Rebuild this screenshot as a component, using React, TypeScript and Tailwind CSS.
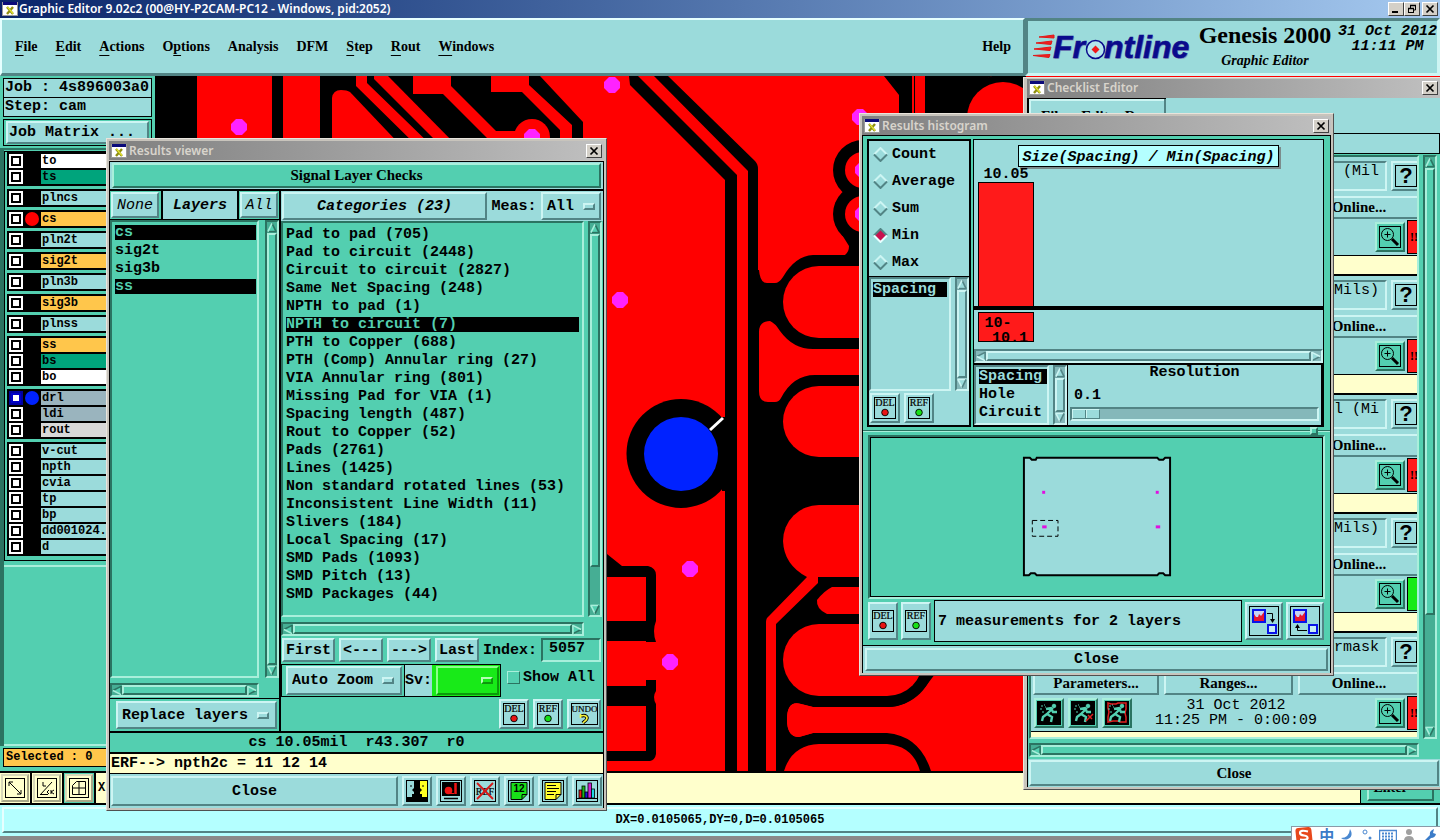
import React from "react";

const MONO = "font-['Liberation_Mono',monospace]";
const MONO_BOLD = "font-['Liberation_Mono',monospace] font-bold text-[15px] leading-[15px]";
const MONO_SMALL = "font-['Liberation_Mono',monospace] font-bold text-[12px] leading-[14px]";
const SERIF_BOLD = "font-['Liberation_Serif',serif] font-bold text-[15px] leading-[18px]";
const RAISED = "border-2 border-t-[#cdf5f3] border-l-[#cdf5f3] border-b-[#528485] border-r-[#528485]";
const SUNKEN = "border-2 border-t-[#528485] border-l-[#528485] border-b-[#cdf5f3] border-r-[#cdf5f3]";
const RAISED_G = "border-2 border-t-[#a9efdb] border-l-[#a9efdb] border-b-[#2b7361] border-r-[#2b7361]";
const SUNKEN_G = "border-2 border-t-[#2b7361] border-l-[#2b7361] border-b-[#a9efdb] border-r-[#a9efdb]";

type Tone = "teal" | "green";

function AppIcon() {
  return (
    <svg width="16" height="14" viewBox="0 0 16 14" className="shrink-0">
      <rect width="16" height="14" fill="#9a9a9a" />
      <rect x="1" y="0" width="14" height="3" fill="#0a0a7a" />
      <rect x="1" y="3" width="14" height="10" fill="#fff" />
      <path d="M5 5l6 7M11 5l-6 7" stroke="#8f8f10" strokeWidth="2.4" />
      <path d="M5.5 5l5.5 6.5" stroke="#e6e632" strokeWidth="1.2" />
    </svg>
  );
}

function CaptionButton({ kind }: { kind: "min" | "restore" | "close" }) {
  return (
    <button
      aria-label={kind}
      className="flex h-[14px] w-4 shrink-0 items-center justify-center border border-b-[#404040] border-l-white border-r-[#404040] border-t-white bg-[#d4d0c8]"
    >
      <svg width="10" height="10" viewBox="0 0 10 10" fill="none" stroke="#000">
        {kind === "min" && <path d="M1 8h6" strokeWidth="2" />}
        {kind === "close" && <path d="M1.500 1.500l7 7M8.500 1.500l-7 7" strokeWidth="1.700" />}
        {kind === "restore" && (
          <g>
            <path d="M3.500 4V1.500h5v4.500H7" />
            <path d="M3 1.500h6M1 4.500h6" strokeWidth="1.500" />
            <rect x="1.500" y="4.500" width="5" height="4" />
          </g>
        )}
      </svg>
    </button>
  );
}

function DialogTitle({ title }: { title: string }) {
  return (
    <div className="flex h-[19px] items-center gap-0.5 bg-linear-to-r from-[#808080] to-[#c0c0c0] px-0.5">
      <AppIcon />
      <h2 className="flex-1 font-['Noto_Sans',sans-serif] text-[12px] font-semibold leading-[16px] text-[#d8d4cc]">{title}</h2>
      <CaptionButton kind="close" />
    </div>
  );
}

function Arrow({ dir, tone }: { dir: "up" | "down" | "left" | "right"; tone: Tone }) {
  const light = tone === "teal" ? "#cdf5f3" : "#a9efdb";
  const dark = tone === "teal" ? "#528485" : "#2b7361";
  const face = tone === "teal" ? "#9bdbdb" : "#53cfb0";
  const rot = { up: 0, right: 90, down: 180, left: 270 }[dir];
  const edge = {
    up: [light, dark, dark],
    right: [light, dark, light],
    down: [dark, light, light],
    left: [light, dark, dark],
  }[dir];
  return (
    <button aria-label={dir} className="flex h-[11px] w-[10px] shrink-0 items-center justify-center">
      <svg width="10" height="11" viewBox="0 0 11 11">
        <g transform={`rotate(${rot} 5.5 5.5)`} strokeWidth="1.7" fill="none">
          <path d="M5.500 1L1 10h9z" fill={face} />
          <path d="M5.500 1L10 10" stroke={edge[1]} />
          <path d="M0.500 10h10" stroke={edge[2]} />
          <path d="M5.500 1L1 10" stroke={edge[0]} />
        </g>
      </svg>
    </button>
  );
}

function VScroll({ tone, thumb = "full" }: { tone: Tone; thumb?: "full" | "long" | "mid" }) {
  const t = tone === "teal";
  const size = { full: "grow", long: "grow-9", mid: "grow-4" }[thumb];
  return (
    <div className={`flex w-3.5 shrink-0 flex-col ${t ? SUNKEN + " bg-[#84b8ba]" : SUNKEN_G + " bg-[#46ae94]"}`}>
      <Arrow dir="up" tone={tone} />
      <div className={`${size} basis-0 ${t ? RAISED + " bg-[#9bdbdb]" : RAISED_G + " bg-[#53cfb0]"}`} />
      {thumb !== "full" && <div className="grow basis-0" />}
      <Arrow dir="down" tone={tone} />
    </div>
  );
}

function HScroll({ tone }: { tone: Tone }) {
  const t = tone === "teal";
  return (
    <div className={`flex h-3.5 w-full shrink-0 items-stretch ${t ? SUNKEN + " bg-[#84b8ba]" : SUNKEN_G + " bg-[#46ae94]"}`}>
      <Arrow dir="left" tone={tone} />
      <div className={`grow ${t ? RAISED + " bg-[#9bdbdb]" : RAISED_G + " bg-[#53cfb0]"}`} />
      <Arrow dir="right" tone={tone} />
    </div>
  );
}

function Btn({ children, className = "", label }: { children: React.ReactNode; className?: string; label?: string }) {
  return (
    <button aria-label={label} className={`flex items-center justify-center ${RAISED} bg-[#9bdbdb] ${className}`}>
      {children}
    </button>
  );
}

function MarkIcon({ text, dot }: { text: string; dot?: string }) {
  const w = text === "UNDO" ? 27 : 22;
  return (
    <svg width={w} height="22" viewBox={`0 0 ${w} 22`} className="shrink-0">
      <rect x="0.500" y="0.500" width={w - 1} height="21" fill="none" stroke="#000" />
      <text x={w / 2} y="9" textAnchor="middle" fontSize={dot ? "10" : "9"} fontFamily="Liberation Serif, serif" fill="#000" stroke="#000" strokeWidth="0.200">
        {text}
      </text>
      {dot ? (
        <circle cx={w / 2} cy="15.500" r="3.300" fill={dot} stroke="#000" strokeWidth="0.900" />
      ) : (
        <g fill="none">
          <path d="M10 13c5-1.500 7 1 5.500 3.500-1 1.800-2.500 2-3.500 3.500" stroke="#000" strokeWidth="3.400" />
          <path d="M9.500 11v4M9.500 13c5.500-1.500 7.500 1 6 3.500-1 1.800-2.500 2-3.500 3.500" stroke="#f5f53c" strokeWidth="1.600" />
        </g>
      )}
    </svg>
  );
}

function DelRef({ className }: { className: string }) {
  return (
    <>
      <Btn label="Delete" className={className}>
        <MarkIcon text="DEL" dot="#e81414" />
      </Btn>
      <Btn label="Reference" className={className}>
        <MarkIcon text="REF" dot="#18e018" />
      </Btn>
    </>
  );
}

function OptionMark({ green = false }: { green?: boolean }) {
  return (
    <span
      className={`h-[7px] w-3 shrink-0 ${
        green
          ? "border-2 border-b-[#0b9a0b] border-l-[#b6ffb6] border-r-[#0b9a0b] border-t-[#b6ffb6]"
          : "border-2 border-b-[#528485] border-l-[#cdf5f3] border-r-[#528485] border-t-[#cdf5f3]"
      }`}
    />
  );
}

function OptionMenu({ label, value, className = "" }: { label: string; value: string; className?: string }) {
  return (
    <label className={`flex items-center ${RAISED} bg-[#9bdbdb] ${className}`}>
      <select aria-label={label} className={`min-w-0 grow appearance-none bg-transparent ${MONO_BOLD}`}>
        <option>{value}</option>
      </select>
      <OptionMark />
    </label>
  );
}

/* ---------- layer column ---------- */

type Layer = { name: string; color: string; dot?: string; active?: boolean };
const TEAL = "bg-[#9bdbdb]";
const ORANGE = "bg-[#ffc64b]";
const LAYER_GROUPS: Layer[][] = [
  [{ name: "to", color: "bg-white" }, { name: "ts", color: "bg-[#00a47c]" }],
  [{ name: "plncs", color: TEAL }],
  [{ name: "cs", color: ORANGE, dot: "bg-[#ff0000]" }],
  [{ name: "pln2t", color: TEAL }],
  [{ name: "sig2t", color: ORANGE }],
  [{ name: "pln3b", color: TEAL }],
  [{ name: "sig3b", color: ORANGE }],
  [{ name: "plnss", color: TEAL }],
  [{ name: "ss", color: ORANGE }, { name: "bs", color: "bg-[#00a47c]" }, { name: "bo", color: "bg-white" }],
  [
    { name: "drl", color: "bg-[#9ab4be]", dot: "bg-[#0022ff]", active: true },
    { name: "ldi", color: "bg-[#9ab4be]" },
    { name: "rout", color: "bg-[#d8d8d8]" },
  ],
  ["v-cut", "npth", "cvia", "tp", "bp", "dd001024.", "d"].map((name) => ({ name, color: TEAL })),
];

function LayerColumn() {
  return (
    <aside className="flex w-[155px] shrink-0 flex-col bg-[#53cfb0]">
      <div className="px-[3px] pt-0.5">
        <div className={`border border-black bg-[#9bdbdb] pl-px ${MONO_BOLD}`}>
          <p className="h-[18px] leading-[18px]">Job : 4s896003a0</p>
        </div>
        <div className={`border border-t-0 border-black bg-[#9bdbdb] pl-px ${MONO_BOLD}`}>
          <p className="h-[18px] leading-[18px]">Step: cam</p>
        </div>
        <div className="mt-0.5 border border-black px-0.5 py-px">
          <Btn className={`h-[23px] w-full !justify-start pl-px ${MONO_BOLD}`}>Job Matrix ...</Btn>
        </div>
      </div>
      <div className="mt-0.5 flex grow flex-col border-l-4 border-t-2 border-[#2b7361]">
        <div className="mt-px flex flex-col gap-[3px] border-b border-l border-t border-black bg-[#53cfb0] pb-1 pl-0.5">
          {LAYER_GROUPS.map((group, gi) => (
            <ul key={gi} className="flex flex-col gap-0.5 bg-black p-0.5 pr-0">
              {group.map((l) => (
                <li key={l.name}>
                  <label className={`flex h-3.5 ${MONO_SMALL}`}>
                    <input
                      type="checkbox"
                      className={
                        l.active
                          ? "h-3.5 w-3.5 shrink-0 appearance-none border-2 border-[#0000a0] bg-white shadow-[inset_0_0_0_2px_#0000c8]"
                          : "h-3.5 w-3.5 shrink-0 appearance-none border-2 border-white bg-white shadow-[inset_0_0_0_2px_#000]"
                      }
                    />
                    <span className="flex w-[18px] shrink-0 items-center justify-center">
                      {l.dot && <span className={`h-3.5 w-3.5 shrink-0 rounded-full ${l.dot}`} />}
                    </span>
                    <span className={`grow whitespace-nowrap pl-px ${l.color}`}>{l.name}</span>
                  </label>
                </li>
              ))}
            </ul>
          ))}
        </div>
        <div className="mt-1 grow border-b-2 border-t-2 border-b-[#a9efdb] border-t-[#a9efdb]" />
      </div>
      <div className="px-[3px] pb-1 pt-0.5">
        <p className={`border border-black bg-[#ffc64b] pl-0.5 font-['Liberation_Mono',monospace] text-[12px] font-bold leading-[17px]`}>Selected : 0</p>
      </div>
    </aside>
  );
}

/* ---------- board artwork ---------- */

function BoardView() {
  const dots: [number, number][] = [[239, 127], [612, 85], [532, 137], [860, 117], [863, 170], [863, 214], [620, 300], [690, 569], [670, 662]];
  return (
    <svg className="block h-full w-full" viewBox="155 76 1285 695" preserveAspectRatio="xMinYMin slice">
      <rect x="155" y="76" width="1285" height="695" fill="#f00" />
      <path d="M155 76H540L583 122V150H155z" fill="#000" />
      <g fill="#f00">
        <path d="M197 76h75v74h-75zM283 76h37v74h-37z" />
        <path d="M332 150V98q1-8 9-8 6 0 9 2l55 58z" />
        <path d="M356 76h11v7l69 67h-15L356 86z" />
        <path d="M374 76h14l73 74h-16L374 79z" />
        <path d="M413 76h38v10l45 45h20v19h-17L443 94h-30z" />
        <path d="M491 76h38v9l43 40v25h-12v-20L522 92h-31z" />
        <circle cx="532" cy="137" r="18" />
      </g>
      <g fill="#000">
        <path d="M629 76h9l99 99v596h-12V180l-95-95z" />
        <path d="M654 76h14l87 85q3 3 3 8v602h-10V171z" />
        <circle cx="681" cy="453.500" r="54.500" />
        <path d="M722 417h6v74h-6z" />
        <path d="M748 270h11q1 13 8 13h8q4 0 8-6Q795 256 813 255h32q4-3 4-9l-10-16h40V349H813q-20 0-33-18-5-8-10-10-11 0-11 11v59q0 11 9 11h7q4 0 6-4Q793 375 815 375H1024V620H860v87h27q22 0 39-21l12-16h-52q44 0 0 37H813l-12-3q-14-4-14 15 0 18 12 18l14-4h74q33 3 44 38H748z" />
        <circle cx="863" cy="170" r="30" />
        <circle cx="863" cy="214" r="30" />
        <path d="M887 613a47 47 0 0 1 0 94h-74v-94z" />
      </g>
      <g fill="#f00">
        <circle cx="863" cy="170" r="18" />
        <circle cx="863" cy="214" r="18" />
        <path d="M900 266h-81a36 36 0 0 0 0 72h81z" />
        <path d="M900 386h-81a36 35.500 0 0 0 0 71h81z" />
        <path d="M900 505h-81a36 36 0 0 0-36 36q1 24 24 36h93z" />
        <path d="M807 577h11v6l-42 41v147h-10V622q0-4 3-6z" />
        <path d="M900 587h-68q-8 4-15 13-1 9 10 14h73z" />
        <rect x="783" y="624" width="140" height="72" rx="36" />
        <path d="M784 771q8-26 35-27h68q26 2 33 27z" />
        <path d="M787 720q0-20 14-16l12 3h40v26h-40l-14 4q-12 0-12-17z" />
      </g>
      <path d="M607 554l15 12h26q8 2 8 9v46q-4 10 0 21h-10v-1h-39v-20h39v-44h-39zM607 686h39v-6h10v11q-4 6 0 13v50q-1 6-6 7h-43v-10h39v-45h-39z" fill="#000" />
      <circle cx="681" cy="454" r="37" fill="#0022ff" />
      <path d="M710 430l13-12" stroke="#fff" strokeWidth="3" />
      <g fill="#000">
        <path d="M884 76h28v50h-13V95z" />
        <path d="M914 76h6v50h-6zM923 76h69q-24 10-32 37v10h-37z" />
        <path d="M992 76h34v50h-70q4-42 36-50z" />
      </g>
      <path d="M915 76h10v50h-10z" fill="#f00" />
      <circle cx="1003" cy="118" r="36" fill="#f00" />
      {dots.map(([x, y]) => (
        <path key={`${x}-${y}`} transform={`translate(${x} ${y})`} d="M-3-8h6l5 5v6l-5 5h-6l-5-5v-6z" fill="#ff22ff" />
      ))}
    </svg>
  );
}

/* ---------- results viewer ---------- */

const CATEGORIES = [
  "Pad to pad (705)", "Pad to circuit (2448)", "Circuit to circuit (2827)", "Same Net Spacing (248)",
  "NPTH to pad (1)", "NPTH to circuit (7)", "PTH to Copper (688)", "PTH (Comp) Annular ring (27)",
  "VIA Annular ring (801)", "Missing Pad for VIA (1)", "Spacing length (487)", "Rout to Copper (52)",
  "Pads (2761)", "Lines (1425)", "Non standard rotated lines (53)", "Inconsistent Line Width (11)",
  "Slivers (184)", "Local Spacing (17)", "SMD Pads (1093)", "SMD Pitch (13)", "SMD Packages (44)",
];

function ListRows({ items, selected, tone }: { items: string[]; selected: string[]; tone: Tone }) {
  return (
    <ul role="listbox" className={MONO_BOLD}>
      {items.map((it) => {
        const on = selected.includes(it);
        return (
          <li key={it} role="option" aria-selected={on} className="flex h-[18px] items-center">
            <span className={`block h-[15px] grow whitespace-pre ${on ? (tone === "teal" ? "bg-black text-[#9bdbdb]" : "bg-black text-[#53cfb0]") : ""}`}>{it}</span>
          </li>
        );
      })}
    </ul>
  );
}

function FacesIcon() {
  return (
    <svg width="22" height="22" viewBox="0 0 22 22">
      <rect width="22" height="22" fill="#000" />
      <path d="M1 1h7v7l-2 2 2 2v2H6v3H1z" fill="#9bdbdb" />
      <path d="M21 1h-7v7l2 2-2 2v2h2v3h5z" fill="#ffff22" />
      <path d="M5 5v2M17 5v2" stroke="#000" />
    </svg>
  );
}
function CameraIcon() {
  return (
    <svg width="22" height="22" viewBox="0 0 22 22">
      <rect x="0.500" y="0.500" width="21" height="21" fill="#9bdbdb" stroke="#000" />
      <rect x="2" y="2" width="18" height="14" fill="#000" />
      <circle cx="8.500" cy="10.500" r="3.800" fill="#f01414" />
      <path d="M8 13.500h6" stroke="#f01414" />
      <path d="M15.500 3v11" stroke="#f01414" strokeWidth="2.500" />
      <path d="M4 18.500h14" stroke="#000" strokeWidth="1.500" />
    </svg>
  );
}
function NoRefIcon() {
  return (
    <svg width="22" height="22" viewBox="0 0 22 22">
      <rect x="0.500" y="0.500" width="21" height="21" fill="none" stroke="#000" />
      <text x="11" y="15" textAnchor="middle" fontSize="10" fontFamily="Liberation Serif, serif" stroke="#000" strokeWidth="0.200">REF</text>
      <path d="M3 3l16 16M19 3L3 19" stroke="#d81818" strokeWidth="1.800" />
    </svg>
  );
}
function PageIcon({ numbered }: { numbered: boolean }) {
  return (
    <svg width="22" height="22" viewBox="0 0 22 22">
      <rect x="0.500" y="0.500" width="21" height="21" fill="none" stroke="#000" />
      <path d="M3 2.500h16v12l-5 5H3z" fill={numbered ? "#18e018" : "#ffff30"} stroke="#000" />
      <path d="M19 14.500h-5v5" fill="none" stroke="#000" />
      {numbered ? (
        <text x="11" y="12" textAnchor="middle" fontSize="10" fontFamily="Liberation Sans, sans-serif" fontWeight="bold">12</text>
      ) : (
        <path d="M5 5.500h9M5 8.500h12M5 11.500h9M5 14.500h7" stroke="#000" />
      )}
    </svg>
  );
}
function BarsIcon() {
  return (
    <svg width="22" height="22" viewBox="0 0 22 22">
      <rect x="0.500" y="0.500" width="21" height="21" fill="#9bdbdb" stroke="#000" />
      <g stroke="#000" strokeWidth="0.800">
        <rect x="3" y="10" width="3" height="8" fill="#f01818" />
        <rect x="6" y="6" width="3" height="12" fill="#18b818" />
        <rect x="9" y="12" width="3" height="6" fill="#1818e0" />
        <rect x="12" y="3" width="3.500" height="15" fill="#d020d0" />
        <rect x="15.500" y="9" width="3" height="9" fill="#20d8e8" />
      </g>
      <path d="M1 18.500h20" stroke="#000" />
    </svg>
  );
}

function ResultsViewer() {
  return (
    <section className="absolute left-[106px] top-[138px] w-[501px] border border-b-[#505050] border-l-[#e8e4dc] border-r-[#505050] border-t-[#e8e4dc] bg-[#c8c4bc] p-0.5">
      <DialogTitle title="Results viewer" />
      <div className="mt-px border border-b-0 border-black bg-[#53cfb0]">
        <div className="border-b-2 border-black bg-[#9bdbdb] px-0.5 py-px">
          <h3 className={`${RAISED_G} bg-[#53cfb0] text-center font-['Liberation_Serif',serif] text-[15px] font-bold leading-[21px]`}>Signal Layer Checks</h3>
        </div>
        <div className="flex border-b-2 border-black">
          <div className="flex w-[171px] shrink-0 flex-col border-r-2 border-black">
            <div className={`flex h-[29px] border-b border-black ${MONO} text-[15px] italic leading-[15px]`}>
              <Btn className="my-px ml-px w-12 shrink-0">None</Btn>
              <h4 className="ml-0.5 flex grow items-center justify-center border-x-2 border-black bg-[#9bdbdb] font-bold">Layers</h4>
              <Btn className="m-px w-[38px] shrink-0">All</Btn>
            </div>
            <div className="flex grow gap-[6px]">
              <div className={`grow ${SUNKEN_G} py-px pl-[3px] pr-px`}>
                <ListRows items={["cs", "sig2t", "sig3b", "ss"]} selected={["cs", "ss"]} tone="green" />
              </div>
              <VScroll tone="green" />
            </div>
            <div className="mt-[5px] flex pr-5">
              <HScroll tone="green" />
            </div>
            <div className="mt-px border-t border-black py-0.5 pl-1.5 pr-0.5">
              <OptionMenu label="Layer action" value="Replace layers" className="h-7 gap-1 pl-1 pr-1.5" />
            </div>
          </div>
          <div className="flex min-w-0 grow flex-col">
            <div className="flex h-[30px] bg-[#9bdbdb]">
              <Btn className={`my-px ml-px w-[205px] shrink-0 italic ${MONO_BOLD}`}>Categories (23)</Btn>
              <span className={`flex grow items-center justify-center ${MONO_BOLD}`}>Meas:</span>
              <OptionMenu label="Measurement filter" value="All" className="my-px mr-0.5 w-[60px] shrink-0 gap-1 pl-1 pr-1" />
            </div>
            <div className="flex gap-1 pr-px">
              <div className={`grow ${SUNKEN_G} pb-3 pl-[3px] pr-[3px] pt-0.5`}>
                <ListRows items={CATEGORIES} selected={["NPTH to circuit (7)"]} tone="green" />
              </div>
              <VScroll tone="green" thumb="long" />
            </div>
            <div className="mt-[5px] flex pr-[19px]">
              <HScroll tone="green" />
            </div>
            <div className={`mt-0.5 flex h-6 gap-1 pl-px pr-0.5 ${MONO_BOLD}`}>
              <Btn className="w-[53px] shrink-0">First</Btn>
              <Btn className="w-11 shrink-0">&lt;---</Btn>
              <Btn className="w-11 shrink-0">---&gt;</Btn>
              <Btn className="w-11 shrink-0">Last</Btn>
              <label htmlFor="index" className="flex w-[54px] shrink-0 items-center">Index:</label>
              <input id="index" defaultValue="5057" className={`min-w-0 grow bg-[#53cfb0] pb-1 pl-1.5 ${SUNKEN_G}`} />
            </div>
            <div className="mt-0.5 flex h-[33px]">
              <div className="flex w-[124px] shrink-0 border border-black py-px pl-1 pr-0.5">
                <OptionMenu label="Zoom mode" value="Auto Zoom" className="grow gap-1 pl-1 pr-1.5" />
              </div>
              <div className={`flex w-24 shrink-0 items-center border-y border-r border-black bg-[#9bdbdb] ${MONO_BOLD}`}>
                <span className="w-[27px] shrink-0">Sv:</span>
                <div className="flex h-full grow bg-[#18ea18] py-px pl-1 pr-px">
                  <label className="flex grow items-center border-2 border-b-[#0b9a0b] border-l-[#8cff8c] border-r-[#0b9a0b] border-t-[#8cff8c] pr-1">
                    <select aria-label="Severity" className="min-w-0 grow appearance-none bg-transparent">
                      <option></option>
                    </select>
                    <OptionMark green />
                  </label>
                </div>
              </div>
              <label className={`ml-1.5 flex h-[26px] items-center gap-[3px] ${MONO_BOLD}`}>
                <input type="checkbox" className="h-[13px] w-[13px] shrink-0 appearance-none border border-b-[#2b7361] border-l-[#a9efdb] border-r-[#2b7361] border-t-[#a9efdb]" />
                <span className="whitespace-nowrap">Show All</span>
              </label>
            </div>
            <div className="mt-0.5 flex h-[30px] justify-end gap-1 pr-0.5">
              <DelRef className="w-[30px] shrink-0" />
              <Btn label="Undo" className="w-[34px] shrink-0">
                <MarkIcon text="UNDO" />
              </Btn>
            </div>
            <div className="h-0.5" />
          </div>
        </div>
        <p className={`h-[19px] whitespace-pre text-center leading-[19px] font-['Liberation_Mono',monospace] text-[15px] font-bold`}>{"cs 10.05mil  r43.307  r0"}</p>
        <p className="h-[22px] border-b border-t-2 border-black bg-[#ffffcc] pl-px font-['Liberation_Mono',monospace] text-[15px] font-bold leading-[19px]">ERF--&gt; npth2c = 11 12 14</p>
        <div className="flex h-[34px] gap-1 bg-[#9bdbdb] px-px py-0.5">
          <Btn className={`grow ${MONO_BOLD}`}>Close</Btn>
          <Btn label="Compare" className="w-[30px] shrink-0"><FacesIcon /></Btn>
          <Btn label="Snapshot" className="w-[30px] shrink-0"><CameraIcon /></Btn>
          <Btn label="Clear references" className="w-[30px] shrink-0"><NoRefIcon /></Btn>
          <Btn label="Numbered notes" className="w-[30px] shrink-0"><PageIcon numbered /></Btn>
          <Btn label="Notes" className="w-[30px] shrink-0"><PageIcon numbered={false} /></Btn>
          <Btn label="Histogram" className="w-[30px] shrink-0"><BarsIcon /></Btn>
        </div>
      </div>
    </section>
  );
}

/* ---------- results histogram ---------- */

function CopyIcon({ back }: { back: boolean }) {
  return (
    <svg width="30" height="30" viewBox="0 0 30 30">
      <rect x="0.500" y="0.500" width="29" height="29" fill="none" stroke="#000" />
      <rect x="4" y="4" width="12" height="12" fill="#c8d4f4" stroke="#0a14e8" strokeWidth="2" />
      <path d="M5 15V8l2 3h2l1-3 2 2 3-4v9z" fill="#e81830" />
      <rect x="19" y="19" width="8" height="8" fill="#c8ecf4" stroke="#0a14e8" strokeWidth="2" />
      {back ? (
        <g><path d="M17 24.500H7.500V21" fill="none" stroke="#000" /><path d="M5 22l2.500-4 2.500 4z" /></g>
      ) : (
        <g><path d="M18 7.500h5.500V14" fill="none" stroke="#000" /><path d="M21 13l2.500 4 2.500-4z" /></g>
      )}
    </svg>
  );
}

function ResultsHistogram() {
  const board = [[1042, 493], [1157, 493], [1042, 528], [1157, 528]];
  return (
    <section className="absolute right-[106px] top-[113px] w-[475px] border border-b-[#505050] border-l-[#e8e4dc] border-r-[#505050] border-t-[#e8e4dc] bg-[#c8c4bc] p-0.5">
      <DialogTitle title="Results histogram" />
      <div className="border border-b-0 border-black bg-[#53cfb0] pt-[3px]">
        <div className="flex gap-0.5 pl-1 pr-1.5">
          <div className="flex w-[104px] shrink-0 flex-col border-2 border-black bg-[#9bdbdb]">
            <fieldset>
              {["Count", "Average", "Sum", "Min", "Max"].map((n) => (
                <label key={n} className={`flex h-[27px] items-center gap-1 pl-1 ${MONO_BOLD}`}>
                  <input type="radio" name="stat" defaultChecked={n === "Min"} className="sr-only" />
                  <svg width="15" height="15" viewBox="0 0 15 15" className="shrink-0">
                    <path d="M1 7.500L7.500 1 14 7.500 7.500 14z" fill={n === "Min" ? "#c8104e" : "#9bdbdb"} />
                    <path d="M1 7.500L7.500 1 14 7.500" fill="none" strokeWidth="2" stroke={n === "Min" ? "#528485" : "#cdf5f3"} />
                    <path d="M1 7.500L7.500 14 14 7.500" fill="none" strokeWidth="2" stroke={n === "Min" ? "#e6ffff" : "#528485"} />
                  </svg>
                  {n}
                </label>
              ))}
            </fieldset>
            <div className="flex gap-1 border-t border-black">
              <div className={`h-[114px] grow ${SUNKEN} px-0.5 pt-px`}>
                <ListRows items={["Spacing"]} selected={["Spacing"]} tone="teal" />
              </div>
              <VScroll tone="teal" />
            </div>
            <div className="mb-0.5 mt-0.5 flex h-[30px] gap-1 pl-px">
              <DelRef className="w-[30px] shrink-0" />
            </div>
          </div>
          <div className={`flex min-w-0 grow flex-col border border-b-2 border-black bg-[#9bdbdb] ${MONO_BOLD}`}>
            <div className="flex grow flex-col pt-[5px]">
              <h3 className="h-[22px] self-center border border-black bg-[#b4ffff] px-[3px] italic leading-[23px] shadow-[2px_2px_0_#7c8c8c]">Size(Spacing) / Min(Spacing)</h3>
              <div className="flex grow flex-col pl-1">
                <div className="flex w-14 grow flex-col">
                  <span className="text-center">10.05</span>
                  <div className="grow border border-b-0 border-black bg-[#ff1a1a]" />
                </div>
              </div>
              <div className="h-1 bg-black" />
              <div className="ml-1 mt-0.5 w-14 border border-black bg-[#ff1a1a] text-center">
                <p className="h-3.5 pt-[3px] pr-4">10-</p>
                <p className="h-3.5 pt-1 pl-2">10.1</p>
              </div>
              <div className="h-[7px]" />
            </div>
            <HScroll tone="teal" />
            <div className="flex h-[62px] shrink-0 border-t-2 border-black">
              <div className={`w-[75px] shrink-0 ${SUNKEN} pl-[3px]`}>
                <ListRows items={["Spacing", "Hole", "Circuit"]} selected={["Spacing"]} tone="teal" />
              </div>
              <div className="ml-1 flex"><VScroll tone="teal" /></div>
              <div className="flex min-w-0 grow flex-col border-l border-r-2 border-black px-0.5 pb-0.5">
                <label htmlFor="resolution" className="text-center">Resolution</label>
                <output htmlFor="resolution" className="mt-2 pl-1">0.1</output>
                <input
                  id="resolution"
                  type="range"
                  defaultValue="0"
                  className={`mt-1 h-3.5 w-full appearance-none bg-[#84b8ba] ${SUNKEN} [&::-webkit-slider-thumb]:h-2.5 [&::-webkit-slider-thumb]:w-7 [&::-webkit-slider-thumb]:appearance-none [&::-webkit-slider-thumb]:border [&::-webkit-slider-thumb]:border-t-[#cdf5f3] [&::-webkit-slider-thumb]:border-l-[#cdf5f3] [&::-webkit-slider-thumb]:border-b-[#528485] [&::-webkit-slider-thumb]:border-r-[#528485] [&::-webkit-slider-thumb]:bg-[linear-gradient(90deg,#9bdbdb_12px,#528485_12px,#528485_13px,#cdf5f3_13px,#cdf5f3_14px,#9bdbdb_14px)]`}
                />
              </div>
            </div>
          </div>
        </div>
        <div className="flex h-2 items-center">
          <div className="h-0.5 grow border-t border-t-[#2b7361] border-b border-b-[#a9efdb]" />
          <div className={`h-2 w-2 ${RAISED_G} bg-[#53cfb0]`} />
          <div className="h-0.5 w-3 border-t border-t-[#2b7361] border-b border-b-[#a9efdb]" />
        </div>
        <div className={`mx-[5px] ${SUNKEN_G}`}>
          <svg viewBox="869 438 453 160" className="block h-[160px] w-full border border-black">
            <path d="M1022 461v-3h6l2 2h4l1-2h122l2 2h4l2-2h5v119h-5l-2-2h-4l-2 2h-122l-2-2h-4l-2 2h-5z" fill="#9bdbdb" stroke="#000" strokeWidth="2" />
            {board.map(([x, y]) => <rect key={`${x}${y}`} x={x - 1.500} y={y - 1.500} width={y > 500 ? 4.500 : 3} height="3" fill="#e010e0" />)}
            <rect x="1030.500" y="521.500" width="26" height="16" fill="none" stroke="#000" strokeDasharray="5 3" />
          </svg>
        </div>
        <div className="mt-px flex h-[42px] items-center gap-[3px] pb-0 pl-[5px] pr-1.5">
          <DelRef className="h-[38px] w-[30px] shrink-0" />
          <p className={`flex h-[42px] grow items-center border border-black bg-[#9bdbdb] pl-[3px] ${MONO_BOLD}`}>7 measurements for 2 layers</p>
          <Btn label="Copy down" className="h-[38px] w-[38px] shrink-0"><CopyIcon back={false} /></Btn>
          <Btn label="Copy up" className="h-[38px] w-[38px] shrink-0"><CopyIcon back /></Btn>
        </div>
        <div className="mt-[3px] border-t border-black bg-[#9bdbdb] px-0.5 pb-0.5 pt-0.5">
          <Btn className={`h-[23px] w-full ${MONO_BOLD}`}>Close</Btn>
        </div>
      </div>
    </section>
  );
}

/* ---------- checklist editor ---------- */

function RunIcon({ variant }: { variant: 0 | 1 | 2 }) {
  return (
    <svg width="24" height="24" viewBox="0 0 24 24">
      <rect width="24" height="24" fill="#000" />
      {variant === 2 && <path d="M3 2l3 1h5l2-1h8v6l-1 4 1 4v5h-6l-2-1h-5l-5 1v-5l1-5-1-4z" fill="none" stroke="#e02020" strokeWidth="1.500" />}
      <g stroke="#53cfb0" fill="none">
        <circle cx="17" cy="5" r="1.800" fill="#53cfb0" />
        <path d="M16 7l-6 6 5 3-1 5M10 13l-4 3-1 4M9 8l5-1 2 4h4" strokeWidth="2.400" />
        <path d="M4 5h2M3 8h2M7 4h1M5 11h2M8 6h1" />
      </g>
      {variant === 1 && <path d="M15 20l7-7M17 14l4 4" stroke="#e02020" strokeWidth="1.500" />}
    </svg>
  );
}

function MagnifierIcon() {
  return (
    <svg width="22" height="22" viewBox="0 0 22 22" fill="none" stroke="#000">
      <rect x="0.500" y="0.500" width="21" height="21" />
      <circle cx="8.500" cy="8.500" r="6" />
      <path d="M5.500 8.500h6M8.500 5.500v6" />
      <path d="M13 13l6 6" strokeWidth="3" />
    </svg>
  );
}

type Check = { tail: string; ok?: boolean; ran?: [string, string] };
const CHECKS: Check[] = [
  { tail: "(Mil" },
  { tail: "Mils)" },
  { tail: "l (Mi" },
  { tail: "Mils)", ok: true },
  { tail: "rmask", ran: ["31 Oct 2012", "11:25 PM - 0:00:09"] },
];

function CheckItem({ tail, ok, ran }: Check) {
  return (
    <li className="flex h-[119px] w-[412px] shrink-0 flex-col border-b-2 border-black bg-[#9bdbdb]">
      <div className="flex h-[39px] gap-1 pl-0.5 pt-1">
        <p className={`h-[30px] w-[354px] ${SUNKEN} pr-1.5 text-right font-['Liberation_Mono',monospace] text-[15px] leading-[17px]`}>{tail}</p>
        <Btn label="Help" className="h-[30px] w-[30px] shrink-0">
          <span className="flex h-[22px] w-[22px] items-center justify-center border border-black font-['Liberation_Sans',sans-serif] text-[22px] font-bold leading-[20px]">?</span>
        </Btn>
      </div>
      <div className={`flex h-[23px] gap-[5px] pl-0.5 ${SERIF_BOLD}`}>
        <Btn className="w-[126px] shrink-0">Parameters...</Btn>
        <Btn className="w-[129px] shrink-0">Ranges...</Btn>
        <Btn className="w-[122px] shrink-0">Online...</Btn>
      </div>
      <div className="flex h-[36px] items-center">
        <div className="flex w-[102px] shrink-0 gap-1 pl-[3px]">
          {([0, 1, 2] as const).map((v) => (
            <button key={v} aria-label={`Run ${v + 1}`} className={`flex h-[30px] w-[30px] items-center justify-center ${RAISED_G} bg-[#53cfb0]`}>
              <RunIcon variant={v} />
            </button>
          ))}
        </div>
        {ran && (
          <p className="w-[206px] shrink-0 text-center font-['Liberation_Mono',monospace] text-[15px] leading-[15px]">
            {ran[0]}
            <br />
            {ran[1]}
          </p>
        )}
        <div className="flex grow justify-end">
          <button aria-label="Inspect" className={`flex h-[30px] w-[30px] items-center justify-center ${RAISED_G} bg-[#53cfb0]`}>
            <MagnifierIcon />
          </button>
        </div>
        <div className={`ml-0.5 flex h-[34px] w-9 shrink-0 items-center border border-black ${ok ? "bg-[#18ea18]" : "bg-[#ff1a1a]"}`}>
          <span className="pl-0.5 font-['Liberation_Serif',serif] text-[12px] font-bold">{ok ? "" : "!!"}</span>
        </div>
      </div>
      <div className="grow border-t border-black bg-[#ffffcc]" />
    </li>
  );
}

function ChecklistEditor() {
  return (
    <section className="absolute bottom-[50px] right-0 top-[77px] flex w-[417px] flex-col border border-r-0 border-b-[#505050] border-l-[#e8e4dc] border-t-[#e8e4dc] bg-[#c8c4bc] pb-0.5 pl-[3px] pt-px">
      <DialogTitle title="Checklist Editor" />
      <div className="flex min-h-0 grow flex-col border-l border-black bg-[#53cfb0]">
        <div className="h-[35px] shrink-0 bg-[#9bdbdb]">
          <nav className={`flex h-[30px] w-[138px] gap-4 border-l border-t border-black pl-3 pt-2 ${SERIF_BOLD} shadow-[inset_-2px_0_0_#528485,inset_2px_2px_0_#cdf5f3]`}>
            <button className="self-start">File</button>
            <button className="self-start">Edit</button>
            <button className="self-start">Run</button>
          </nav>
        </div>
        <div className="h-[21px] shrink-0 border border-black bg-[#9bdbdb]" />
        <div className="mt-px flex min-h-0 grow gap-1 pl-px pr-[3px]">
          <div className={`min-w-0 grow overflow-hidden ${SUNKEN_G}`}>
            <ul className="flex flex-col">
              {CHECKS.map((c, i) => (
                <CheckItem key={i} {...c} />
              ))}
            </ul>
          </div>
          <VScroll tone="green" thumb="mid" />
        </div>
        <div className="mt-1 flex shrink-0 pb-0.5 pl-px pr-[21px]">
          <HScroll tone="green" />
        </div>
        <div className="shrink-0 bg-[#9bdbdb] p-px">
          <Btn className={`h-[26px] w-full ${SERIF_BOLD}`}>Close</Btn>
        </div>
      </div>
    </section>
  );
}

/* ---------- main window ---------- */

const MENUS: [string, string, string][] = [
  ["", "F", "ile"], ["", "E", "dit"], ["", "A", "ctions"], ["O", "p", "tions"], ["Analysis", "", ""],
  ["DFM", "", ""], ["", "S", "tep"], ["", "R", "out"], ["", "W", "indows"],
];

function Header() {
  return (
    <header className="flex h-[58px] shrink-0 bg-[#9bdbdb]">
      <nav className={`flex grow items-center border-2 border-b-[3px] border-[#528485] border-l-[#e6ffff] border-t-[#e6ffff] pl-[13px] pr-3 font-['Liberation_Serif',serif] text-[14px] font-bold leading-[18px]`}>
        <div className="flex gap-[18px]">
          {MENUS.map(([a, u, b]) => (
            <button key={a + u + b}>
              {a}
              <span className="underline underline-offset-4">{u}</span>
              {b}
            </button>
          ))}
        </div>
        <button className="ml-auto">Help</button>
      </nav>
      <div className="flex w-[415px] shrink-0 border-[3px] border-b-[#cdf5f3] border-l-[#528485] border-r-[#cdf5f3] border-t-[#528485]">
        <svg width="164" height="52" viewBox="1028 21 164 52" className="shrink-0">
          <path d="M1039 37l15-2v3zM1036 43l16-2-1 3.500zM1034 49l17-2-1 3.500zM1033 55.500l17-1-1 3z" fill="#f02020" stroke="#e01818" strokeWidth="1" />
          <g fontFamily="Liberation Sans, sans-serif" fontWeight="bold" fontStyle="italic" fontSize="32">
            <text x="1054" y="59" fill="#8a9cc0">Fr</text>
            <text x="1105" y="59" fill="#8a9cc0">ntline</text>
            <text x="1053" y="58" fill="#0a0a8c" stroke="#0a0a8c" strokeWidth="0.600">Fr</text>
            <text x="1104" y="58" fill="#0a0a8c" stroke="#0a0a8c" strokeWidth="0.600">ntline</text>
          </g>
          <circle cx="1095.500" cy="49.500" r="9" fill="#b4e6ec" stroke="#0a0a8c" strokeWidth="1.500" />
          <path d="M1095.500 45.500l4 4-4 4-4-4z" fill="#f01818" />
        </svg>
        <div className="flex grow flex-col items-center font-['Liberation_Serif',serif]">
          <h1 className="whitespace-nowrap text-[24px] font-bold leading-[28px]">Genesis 2000</h1>
          <p className="text-[14px] font-bold italic leading-[24px]">Graphic Editor</p>
        </div>
        <p className={`shrink-0 pt-[3px] text-center italic ${MONO_BOLD}`}>
          31 Oct 2012
          <br />
          11:11 PM
        </p>
      </div>
    </header>
  );
}

function ToolCell({ active = false, label, children }: { active?: boolean; label: string; children: React.ReactNode }) {
  return (
    <div className={`flex w-8 items-center justify-center border-r-2 border-black ${active ? "bg-[#53cfb0]" : ""}`}>
      <button aria-label={label} className="flex h-7 w-7 items-center justify-center border-2 border-b-[#a8a888] border-l-[#d8d8b8] border-r-[#a8a888] border-t-[#d8d8b8] bg-[#ffffcc]">
        <svg width="20" height="20" viewBox="0 0 20 20" fill="none" stroke="#000">
          {children}
        </svg>
      </button>
    </div>
  );
}

export default function App() {
  return (
    <div className="relative flex h-screen flex-col overflow-hidden bg-[#9bdbdb] text-black">
      <div className="flex h-[18px] shrink-0 items-center bg-linear-to-r from-[#0a246a] to-[#a6caf0] px-0.5">
        <AppIcon />
        <span className="grow pl-px font-['Noto_Sans',sans-serif] text-[12px] font-semibold leading-[16px] text-white">
          Graphic Editor 9.02c2 (00@HY-P2CAM-PC12 - Windows, pid:2052)
        </span>
        <CaptionButton kind="min" />
        <CaptionButton kind="restore" />
        <span className="w-0.5" />
        <CaptionButton kind="close" />
      </div>
      <Header />
      <main className="flex min-h-0 grow">
        <LayerColumn />
        <div className="min-w-0 grow">
          <BoardView />
        </div>
      </main>
      <div className="flex h-[34px] shrink-0 border-y-2 border-black bg-[#ffffcc]">
        <ToolCell label="Select line">
          <rect x="0.500" y="0.500" width="19" height="19" />
          <path d="M4 4l12 12M4 8V4h4M16 12v4h-4" />
        </ToolCell>
        <ToolCell label="Select angle">
          <rect x="0.500" y="0.500" width="19" height="19" />
          <path d="M3 17L15 4M3 16.500h8M6 4v4h3M12 12l-2 2 2 2M14 12v4M17 12l-3 2 3 2" />
        </ToolCell>
        <ToolCell label="Grid" active>
          <rect x="0.500" y="0.500" width="19" height="19" />
          <path d="M3.500 16.500v-9l4-4h9v13zM10 3.500v13M3.500 10h13" />
        </ToolCell>
        <span className={`self-center pl-0.5 ${MONO_SMALL}`}>X</span>
        <div className="ml-auto w-20 border-l border-black bg-[#53cfb0] px-1.5 pb-0.5">
          <button className={`h-full w-full ${RAISED_G} pr-5 text-center font-['Liberation_Serif',serif] text-[14px] font-bold`}>Enter</button>
        </div>
      </div>
      <footer className="h-[35px] shrink-0 border-b-4 border-[#8a8a8a] bg-[#b4ffff] pt-0.5">
        <p className={`mx-0.5 border-2 border-t-[#e6ffff] border-l-[#e6ffff] border-b-[#528485] border-r-[#528485] h-[26px] text-center font-['Liberation_Mono',monospace] text-[12px] font-bold leading-[22px]`}>DX=0.0105065,DY=0,D=0.0105065</p>
      </footer>

      <ChecklistEditor />
      <ResultsHistogram />
      <ResultsViewer />

      <div className="absolute bottom-0 right-0 flex h-3.5 w-[149px] items-start justify-around overflow-hidden border-l border-t border-[#8a9aa8] bg-white">
        <svg width="18" height="14" viewBox="0 0 18 14">
          <rect x="1" y="0.500" width="16" height="18" rx="3" fill="#e8481c" transform="rotate(-6 9 9)" />
          <path d="M13 4.500q-8-2-8 1.500 0 2 4 2.500t3.500 3q-1 2-7.500 1" fill="none" stroke="#fff" strokeWidth="2.200" />
        </svg>
        <span className="font-['Noto_Sans_CJK_SC',sans-serif] text-[15px] font-bold leading-[16px] text-[#3c7cc8]">中</span>
        <svg width="14" height="14" viewBox="0 0 14 14"><path d="M10 2q4 7-2 10-4 1.500-7-1 8 0 9-9z" fill="#4a88d0" /></svg>
        <svg width="12" height="14" viewBox="0 0 12 14"><circle cx="4" cy="5" r="2" fill="none" stroke="#4a88d0" /><circle cx="9" cy="11" r="1.500" fill="#4a88d0" /></svg>
        <svg width="18" height="14" viewBox="0 0 18 14"><rect x="0.500" y="3.500" width="17" height="12" fill="none" stroke="#4a88d0" strokeWidth="1.500" /><path d="M3 6.500h12M3 9.500h12M3 12.500h12" stroke="#4a88d0" strokeWidth="2" strokeDasharray="2 1" /></svg>
        <svg width="12" height="14" viewBox="0 0 12 14"><circle cx="6" cy="5" r="3" fill="#a0a0a0" /><path d="M1 14q0-5 5-5t5 5z" fill="#a0a0a0" /></svg>
        <svg width="16" height="14" viewBox="0 0 16 14"><path d="M3 14l6-6q-1-4 4-6l-1 4 3 1q-1 4-5 4l-5 5z" fill="#3c7cc8" /></svg>
      </div>
    </div>
  );
}
